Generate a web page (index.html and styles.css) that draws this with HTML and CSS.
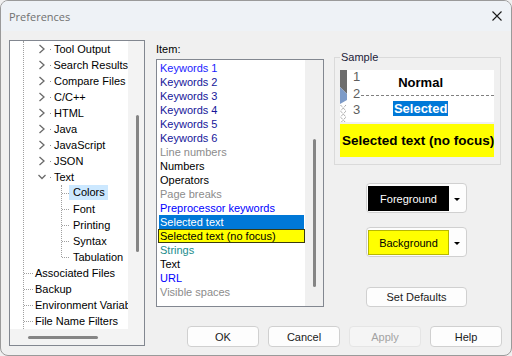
FILE: index.html
```html
<!DOCTYPE html>
<html lang="en">
<head>
    <meta charset="UTF-8">
    <meta name="viewport" content="width=device-width, initial-scale=1.0">
    <title>Preferences</title>
    <link rel="stylesheet" href="styles.css">
</head>
<body>
  <div class="window">
    <div class="titlebar">
        <span class="title">Preferences</span>
        <svg class="close" width="10" height="10" viewBox="0 0 10 10"><path d="M0.5 0.5 L9.5 9.5 M9.5 0.5 L0.5 9.5"/></svg>
    </div>
    <div class="content">
        <div class="tree">
            <div class="tree-view">
                <div class="root">
                    <div class="row l2"><svg class="chev" viewBox="0 0 8 10"><path d="M1.5 1 L6 5 L1.5 9"/></svg><i class="dot"></i><span class="label">Tool Output</span></div>
                    <div class="row l2"><svg class="chev" viewBox="0 0 8 10"><path d="M1.5 1 L6 5 L1.5 9"/></svg><i class="dot"></i><span class="label">Search Results</span></div>
                    <div class="row l2"><svg class="chev" viewBox="0 0 8 10"><path d="M1.5 1 L6 5 L1.5 9"/></svg><i class="dot"></i><span class="label">Compare Files</span></div>
                    <div class="row l2"><svg class="chev" viewBox="0 0 8 10"><path d="M1.5 1 L6 5 L1.5 9"/></svg><i class="dot"></i><span class="label">C/C++</span></div>
                    <div class="row l2"><svg class="chev" viewBox="0 0 8 10"><path d="M1.5 1 L6 5 L1.5 9"/></svg><i class="dot"></i><span class="label">HTML</span></div>
                    <div class="row l2"><svg class="chev" viewBox="0 0 8 10"><path d="M1.5 1 L6 5 L1.5 9"/></svg><i class="dot"></i><span class="label">Java</span></div>
                    <div class="row l2"><svg class="chev" viewBox="0 0 8 10"><path d="M1.5 1 L6 5 L1.5 9"/></svg><i class="dot"></i><span class="label">JavaScript</span></div>
                    <div class="row l2"><svg class="chev" viewBox="0 0 8 10"><path d="M1.5 1 L6 5 L1.5 9"/></svg><i class="dot"></i><span class="label">JSON</span></div>
                    <div class="row l2"><svg class="chev" viewBox="0 0 8 10"><path d="M0.5 3 L4 6.5 L7.5 3"/></svg><i class="dot"></i><span class="label">Text</span></div>
                    <div class="children">
                        <div class="row"><i class="hline"></i><span class="label selected">Colors</span></div>
                        <div class="row"><i class="hline"></i><span class="label">Font</span></div>
                        <div class="row"><i class="hline"></i><span class="label">Printing</span></div>
                        <div class="row"><i class="hline"></i><span class="label">Syntax</span></div>
                        <div class="row last"><i class="hline"></i><span class="label">Tabulation</span></div>
                    </div>
                    <div class="row l1"><i class="hline"></i><span class="label">Associated Files</span></div>
                    <div class="row l1"><i class="hline"></i><span class="label">Backup</span></div>
                    <div class="row l1"><i class="hline"></i><span class="label">Environment Variables</span></div>
                    <div class="row l1"><i class="hline"></i><span class="label">File Name Filters</span></div>
                </div>
            </div>
            <div class="vtrack"><i class="thumb"></i></div>
            <div class="htrack"><i class="thumb"></i></div>
            <div class="corner"></div>
        </div>

        <div class="items">
            <div class="caption">Item:</div>
            <div class="listbox">
                <ul class="list">
                    <li class="kw1">Keywords 1</li>
                    <li class="kw">Keywords 2</li>
                    <li class="kw">Keywords 3</li>
                    <li class="kw">Keywords 4</li>
                    <li class="kw">Keywords 5</li>
                    <li class="kw">Keywords 6</li>
                    <li class="grey">Line numbers</li>
                    <li>Numbers</li>
                    <li>Operators</li>
                    <li class="grey">Page breaks</li>
                    <li class="blue">Preprocessor keywords</li>
                    <li class="sel">Selected text</li>
                    <li class="focus">Selected text (no focus)</li>
                    <li class="teal">Strings</li>
                    <li>Text</li>
                    <li class="blue">URL</li>
                    <li class="grey">Visible spaces</li>
                </ul>
                <div class="vtrack"><i class="thumb"></i></div>
            </div>
        </div>

        <div class="side">
            <fieldset class="sample">
                <legend>Sample</legend>
                <div class="preview">
                    <svg class="gutter" width="7" height="52" viewBox="0 0 7 52">
                        <path d="M0 0 H7 V24 L0 17 Z" fill="#6d6d6d"/>
                        <path d="M0 17 L7 24 V30 L0 34 Z" fill="#7d9bc8"/>
                        <path d="M0.5 35 L6 41 L0.5 47 L6 53 M6 35 L0.5 41 L6 47 L0.5 53" fill="none" stroke="#8a8a8a" stroke-width="1" stroke-dasharray="1 1"/>
                    </svg>
                    <div class="numbers"><span>1</span><span>2</span><span>3</span><span>4</span></div>
                    <div class="lines">
                        <div class="normal">Normal</div>
                        <div class="selected"><span>Selected</span></div>
                    </div>
                </div>
                <div class="nofocus">Selected text (no focus)</div>
            </fieldset>

            <div class="color-btn fg">
                <span class="swatch">Foreground</span>
                <span class="arrow"></span>
            </div>
            <div class="color-btn bg">
                <span class="swatch">Background</span>
                <span class="arrow"></span>
            </div>
            <button class="btn defaults">Set Defaults</button>
        </div>

        <div class="actions">
            <button class="btn">OK</button>
            <button class="btn">Cancel</button>
            <button class="btn" disabled>Apply</button>
            <button class="btn">Help</button>
        </div>
    </div>
  </div>
</body>
</html>
```

FILE: styles.css
```css
*{
    margin: 0;
    padding: 0;
    box-sizing: border-box;
}
body{
    font-family: "Liberation Sans", Arial, sans-serif;
    font-size: 11px;
    color: #000;
    background: #f0f0f0;
}
.window{
    width: 512px;
    height: 356px;
    border: 1px solid #9a9a9a;
    border-radius: 8px;
    overflow: hidden;
    display: flex;
    flex-direction: column;
    background: #f0f0f0;
}
.titlebar{
    height: 30px;
    flex: none;
    background: #eef2f6;
    display: flex;
    align-items: center;
    justify-content: space-between;
    padding: 0 9px 0 8px;
}
.titlebar .title{
    font-family: "Open Sans", "Noto Sans", sans-serif;
    font-size: 11px;
    color: #707070;
}
.titlebar .close path{
    stroke: #1a1a1a;
    stroke-width: 1.1;
}

.content{
    flex: 1;
    display: grid;
    grid-template-columns: 147px 178px 168px;
    grid-template-rows: 1fr 21px;
    row-gap: 7px;
    padding: 9px 9px 9px 8px;
}

/* tree */
.tree{
    grid-row: 1 / 3;
    width: 136px;
    margin-bottom: 1px;
    border: 1px solid #828790;
    background: #f3f3f3;
    display: grid;
    grid-template-columns: 1fr 16px;
    grid-template-rows: 1fr 16px;
}
.tree-view{
    background: #fff;
    overflow: hidden;
}
.tree .root{
    margin-left: 13px;
    border-left: 1px dotted #a0a0a0;
    min-height: 100%;
}
.tree .row{
    height: 16px;
    display: flex;
    align-items: center;
    white-space: nowrap;
}
.tree .label{
    line-height: 16px;
    color: #000;
}
.tree .chev{
    width: 8px;
    height: 10px;
    flex: none;
    margin-left: 14px;
}
.tree .chev path{
    fill: none;
    stroke: #6b6b6b;
    stroke-width: 1.3;
}
.tree .dot{
    width: 1px;
    height: 1px;
    margin: 0 3px 0 4px;
    background: #909090;
}
.tree .children{
    display: flex;
    flex-direction: column;
    margin: 0 0 8px 37px;
    border-left: 1px dotted #a0a0a0;
}
.tree .children .last{
    margin-bottom: -8px;
}
.tree .hline{
    height: 0;
    border-top: 1px dotted #a0a0a0;
    flex: none;
}
.tree .children .hline{
    width: 7px;
}
.tree .children .label{
    padding: 0 3px 0 4px;
}
.tree .children .label.selected{
    background: #cce8ff;
    line-height: 15px;
    align-self: flex-start;
}
.tree .l1 .hline{
    width: 9px;
    margin-right: 2px;
}
.tree .vtrack{
    display: flex;
    justify-content: center;
    padding-left: 2px;
}
.tree .vtrack .thumb{
    width: 3px;
    height: 137px;
    margin-top: 74px;
    border-radius: 2px;
    background: #858585;
}
.tree .htrack{
    display: flex;
    align-items: center;
}
.tree .htrack .thumb{
    width: 70px;
    height: 3px;
    margin-left: 18px;
    border-radius: 2px;
    background: #858585;
}

/* item list */
.items .caption{
    margin-top: 2px;
    line-height: 14px;
    height: 14px;
    margin-bottom: 3px;
}
.listbox{
    width: 168px;
    height: 248px;
    border: 1px solid #828790;
    background: #f0f0f0;
    display: grid;
    grid-template-columns: 148px 18px;
}
.list{
    list-style: none;
    background: #fff;
    padding-top: 1px;
}
.list li{
    height: 14px;
    line-height: 14px;
    padding-left: 3px;
    white-space: nowrap;
}
.list .kw1{ color: #1c1cff; }
.list .kw{ color: #16169a; }
.list .blue{ color: #0000ff; }
.list .grey{ color: #8c8c8c; }
.list .teal{ color: #1a8c8c; }
.list .sel{
    margin: 0 1px 0 2px;
    padding-left: 1px;
    background: #0078d7;
    color: #fff;
}
.list .focus{
    margin-left: 1px;
    padding-left: 1px;
    line-height: 12px;
    background: #ffff00;
    border: 1px solid #3a3a10;
}
.listbox .vtrack{
    display: flex;
    justify-content: center;
}
.listbox .vtrack .thumb{
    width: 3px;
    height: 148px;
    margin-top: 79px;
    border-radius: 2px;
    background: #858585;
}

/* sample */
.side{
    display: flex;
    flex-direction: column;
    align-items: flex-start;
}
.sample{
    width: 167px;
    margin-top: 11px;
    padding: 6px 6px 7px 5px;
    border: 1px solid #dadada;
}
.sample legend{
    padding: 0 1px;
    line-height: 13px;
    color: #1c1c3a;
}
.preview{
    height: 52px;
    background: #fff;
    display: flex;
    overflow: hidden;
}
.preview .gutter{
    flex: none;
}
.preview .numbers{
    width: 14px;
    flex: none;
    margin-top: -1px;
    padding-left: 6px;
    display: flex;
    flex-direction: column;
    font-size: 13px;
    line-height: 16.5px;
    color: #5e5e5e;
}
.preview .lines{
    flex: 1;
    font-size: 13px;
    font-weight: bold;
}
.preview .normal{
    height: 26px;
    line-height: 25px;
    padding-right: 14px;
    text-align: center;
    background: repeating-linear-gradient(to right, #808080 0 3px, transparent 3px 5px) bottom / 100% 1px no-repeat;
}
.preview .selected{
    margin-top: 6px;
    padding-right: 14px;
    text-align: center;
    line-height: 14px;
}
.preview .selected span{
    background: #0078d7;
    color: #fff;
    padding: 0 1px;
}
.nofocus{
    margin-top: 2px;
    height: 33px;
    line-height: 33px;
    padding-left: 2px;
    background: #ffff00;
    font-size: 13.5px;
    font-weight: bold;
    white-space: nowrap;
    overflow: hidden;
}

/* colour buttons */
.color-btn{
    width: 101px;
    height: 30px;
    margin-left: 32px;
    padding: 1px 1px 0 1px;
    border: 1px solid #d0d0d0;
    border-radius: 4px;
    background: #fdfdfd;
    display: flex;
    align-items: center;
}
.color-btn.fg{
    margin-top: 18px;
}
.color-btn.bg{
    margin-top: 14px;
}
.color-btn .swatch{
    width: 81px;
    height: 25px;
    display: flex;
    justify-content: center;
    align-items: center;
}
.fg .swatch{
    background: #000;
    color: #fff;
}
.bg .swatch{
    background: #ffff00;
    border: 1px solid #b8b800;
}
.color-btn .arrow{
    flex: 1;
    display: flex;
    justify-content: center;
}
.color-btn .arrow::after{
    content: "";
    border-left: 3px solid transparent;
    border-right: 3px solid transparent;
    border-top: 3px solid #000;
    margin-top: 1px;
}

/* plain buttons */
.btn{
    font-family: "Liberation Sans", Arial, sans-serif;
    font-size: 11px;
    color: #1a1a1a;
    height: 21px;
    width: 72px;
    border: 1px solid #d0d0d0;
    border-radius: 4px;
    background: #fdfdfd;
}
.btn:disabled{
    color: #a3a3a3;
    background: #f5f5f5;
    border-color: #e5e5e5;
}
.btn.defaults{
    width: 101px;
    height: 20px;
    margin: 30px 0 0 32px;
}
.actions{
    grid-column: 2 / 4;
    grid-row: 2;
    display: flex;
    justify-content: flex-end;
    gap: 9px;
}
```
